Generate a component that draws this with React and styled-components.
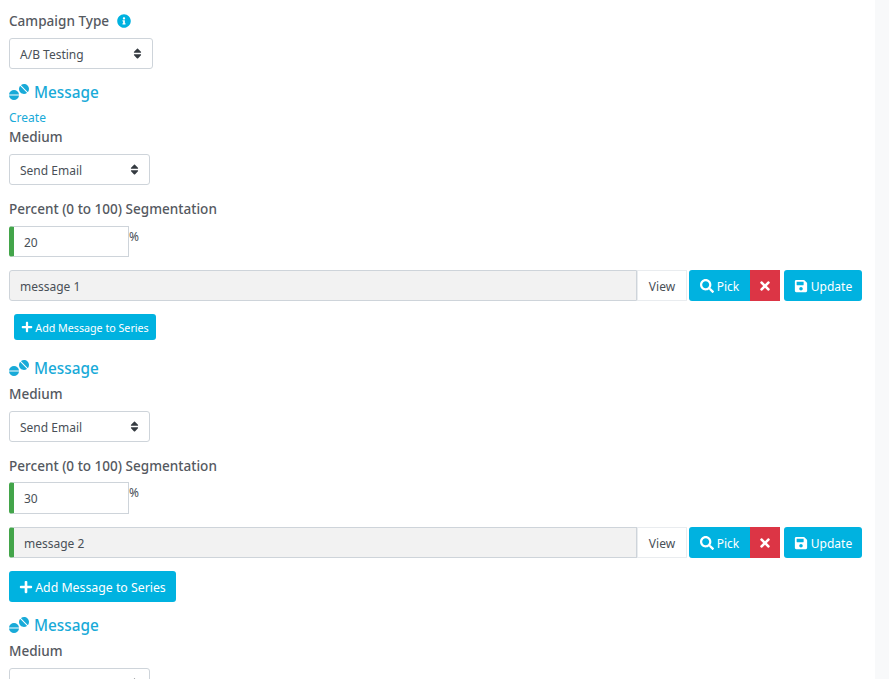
import React from 'react';
import styled, { createGlobalStyle } from 'styled-components';
import { FaInfoCircle, FaSearch, FaTimes, FaSave, FaPlus, FaTablets, FaSort } from 'react-icons/fa';

const Global = createGlobalStyle`
  html, body { margin: 0; padding: 0; background: #fff; overflow: hidden; }
  * { box-sizing: border-box; }
`;

const Page = styled.div`
  display: flex;
  width: 889px;
  height: 679px;
  overflow: hidden;
  font-family: "Noto Sans", "Open Sans", sans-serif;
  font-size: 13px;
  color: #495057;
`;

const Content = styled.main`
  flex: 1;
  padding: 12px 13px 0 9px;
`;

const Gutter = styled.aside`
  width: 14px;
  background: #f8f9fa;
`;

const Label = styled.div`
  display: flex;
  align-items: center;
  gap: 8px;
  height: 18px;
  font-size: 13.55px;
  font-weight: 500;
  color: #55595f;
`;

const InfoIcon = styled(FaInfoCircle)`
  color: #00b2e0;
  font-size: 14px;
`;

const Select = styled.div`
  display: flex;
  align-items: center;
  justify-content: space-between;
  width: ${p => p.$width}px;
  height: 31px;
  margin-top: 8px;
  padding: 2px 8px 0 10px;
  background: #fff;
  border: 1px solid #ced4da;
  border-radius: 3px;
  font-size: 12px;
  svg { font-size: 13px; color: #343a40; margin: -2px 0 0 auto; }
`;

const Heading = styled.h3`
  display: flex;
  align-items: center;
  gap: 5px;
  height: 22px;
  margin: ${p => p.$top}px 0 0;
  font-size: 15.3px;
  font-weight: 500;
  color: #18aad8;
  svg { font-size: 20px; }
`;

const CreateLink = styled.a`
  display: block;
  height: 18px;
  margin-top: 6px;
  margin-bottom: -1px;
  font-size: 12px;
  color: #18aad8;
`;

const MediumLabel = styled(Label)`
  margin-top: ${p => p.$top}px;
`;

const PercentRow = styled.div`
  display: flex;
  align-items: flex-start;
  margin-top: ${p => p.$top}px;
`;

const PercentInput = styled.div`
  display: flex;
  align-items: center;
  width: 120px;
  height: ${p => p.$height}px;
  padding: ${p => (p.$height > 31 ? 0 : 2)}px 0 0 10px;
  border: 1px solid #ced4da;
  border-left: 5px solid #43a54a;
  border-radius: 3px 0 0 3px;
  font-size: 12px;
`;

const PercentSign = styled.span`
  font-size: 12px;
  line-height: 22px;
`;

const MessageRow = styled.div`
  display: flex;
  height: 31px;
  margin-top: 13px;
`;

const MessageName = styled.div`
  display: flex;
  align-items: center;
  width: 628px;
  padding: 2px 0 0 10px;
  background: #f2f2f2;
  border: 1px solid #ced4da;
  border-left: ${p => (p.$valid ? '5px solid #43a54a' : '1px solid #ced4da')};
  border-radius: 3px 0 0 3px;
  font-size: 12px;
`;

const ViewButton = styled.div`
  display: flex;
  align-items: center;
  justify-content: center;
  width: 50px;
  margin-right: 2px;
  padding-top: 1px;
  border: 1px solid #e9ecef;
  font-size: 12px;
`;

const Button = styled.button`
  display: inline-flex;
  align-items: center;
  justify-content: center;
  gap: 3px;
  width: ${p => p.$width}px;
  padding: 1px 0 0;
  border: 0;
  background: ${p => (p.$danger ? '#dc3545' : '#00b2e0')};
  color: #fff;
  font-family: inherit;
  font-size: 12px;
  border-radius: ${p => p.$radius || '0'};
  margin-left: ${p => p.$left || 0}px;
  svg { font-size: 14px; margin-top: -1px; }
`;

const AddButton = styled.button`
  display: flex;
  align-items: center;
  justify-content: center;
  gap: 2px;
  width: ${p => (p.$small ? 142 : 167)}px;
  height: ${p => (p.$small ? 26 : 31)}px;
  margin: 13px 0 0 ${p => (p.$small ? 5 : 0)}px;
  padding: 1px 0 0;
  border: 0;
  border-radius: 3px;
  background: #00b2e0;
  color: #fff;
  font-family: inherit;
  font-size: ${p => (p.$small ? 10.7 : 12.3)}px;
  svg { font-size: ${p => (p.$small ? 12 : 14)}px; margin-top: -1px; }
`;

const MessageBlock = ({ percent, name, valid, small, create, headingTop, inputTop, inputHeight }) => (
  <>
    <Heading $top={headingTop}><FaTablets />Message</Heading>
    {create && <CreateLink>Create</CreateLink>}
    <MediumLabel $top={create ? 2 : 6}>Medium</MediumLabel>
    <Select $width={141}>Send Email<FaSort /></Select>
    <MediumLabel $top={15}>Percent (0 to 100) Segmentation</MediumLabel>
    <PercentRow $top={inputTop}>
      <PercentInput $height={inputHeight}>{percent}</PercentInput>
      <PercentSign>%</PercentSign>
    </PercentRow>
    <MessageRow>
      <MessageName $valid={valid}>{name}</MessageName>
      <ViewButton>View</ViewButton>
      <Button $width={61} $radius="3px 0 0 3px"><FaSearch />Pick</Button>
      <Button $width={30} $danger><FaTimes /></Button>
      <Button $width={78} $left={4} $radius="3px"><FaSave />Update</Button>
    </MessageRow>
    {small !== undefined && (
      <AddButton $small={small}><FaPlus />Add Message to Series</AddButton>
    )}
  </>
);

export default function App() {
  return (
    <Page>
      <Global />
      <Content>
        <Label>Campaign Type <InfoIcon /></Label>
        <Select $width={144}>A/B Testing<FaSort /></Select>
        <MessageBlock headingTop={12} create percent="20" name="message 1" small inputTop={8} inputHeight={31} />
        <MessageBlock headingTop={17} percent="30" name="message 2" valid small={false} inputTop={7} inputHeight={32} />
        <Heading $top={12}><FaTablets />Message</Heading>
        <MediumLabel $top={6}>Medium</MediumLabel>
        <Select $width={141}><FaSort /></Select>
      </Content>
      <Gutter />
    </Page>
  );
}
